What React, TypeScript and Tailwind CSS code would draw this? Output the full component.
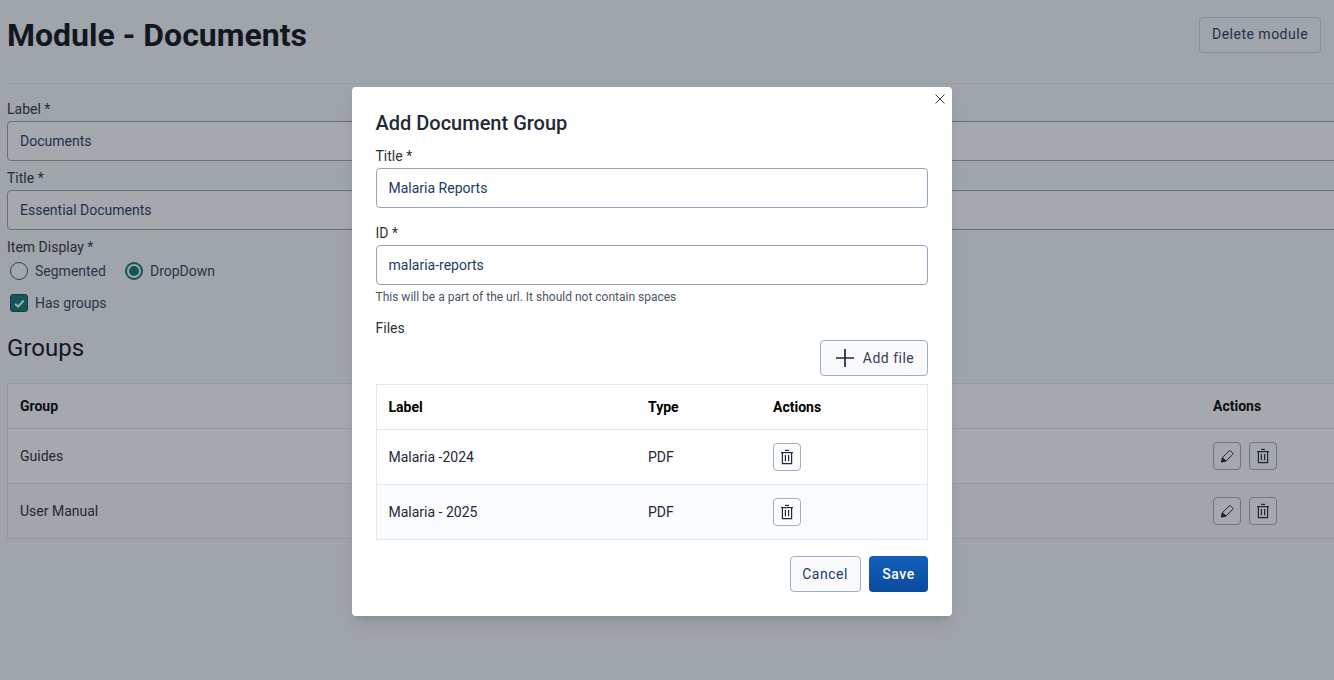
import React from "react";

const Trash = () => (
  <svg width="16" height="16" viewBox="0 0 16 16" fill="none" stroke="currentColor" strokeWidth="1.2">
    <path d="M2 3.6h12" />
    <path d="M6 1.4h4" />
    <path d="M3.4 3.6v11h9.2v-11" />
    <path d="M6.4 6v6.2M9.6 6v6.2" />
  </svg>
);

const Pencil = () => (
  <svg width="16" height="16" viewBox="0 0 16 16" fill="none" stroke="currentColor" strokeWidth="1">
    <path d="M10 3a1.2 1.2 0 0 1 1.7 0l1.9 1.9a1.2 1.2 0 0 1 0 1.7L7 13l-4.5 1 1-4.5z" strokeLinejoin="round" />
    <path d="M2.5 14l1-4.5 3.5 3.5z" fill="currentColor" />
  </svg>
);

const IconBtn = ({ children, dim }: { children: React.ReactNode; dim?: boolean }) => (
  <button
    className={`w-[28px] h-[28px] flex items-center justify-center rounded-[4px] border text-[#1e293b] ${
      dim ? "border-[#a3adbb] bg-white" : "border-[#a0aec0] bg-[#fbfcfe]"
    }`}
  >
    {children}
  </button>
);

const Field = ({ label, value }: { label: string; value: string }) => (
  <div className="flex flex-col">
    <label className="text-[14px] leading-[20px] text-[#2d3238] mb-[2px]">{label}</label>
    <input
      readOnly
      value={value}
      className="w-full h-[40px] px-[12px] text-[14px] text-[#1e3a5f] bg-white border border-[#94a3b8] rounded-[4px] outline-none"
    />
  </div>
);

const Row = ({ name, alt }: { name: string; alt?: boolean }) => (
  <div
    className={`h-[55px] flex items-center justify-between pl-[12px] pr-[69px] border-t border-[#e2e8f0] text-[14px] text-[#1f2937] ${
      alt ? "bg-[#fbfcfe]" : "bg-white"
    }`}
  >
    <span>{name}</span>
    <div className="flex gap-[8px] w-[64px]">
      <IconBtn dim>
        <Pencil />
      </IconBtn>
      <IconBtn dim>
        <Trash />
      </IconBtn>
    </div>
  </div>
);

const FileRow = ({ label, alt }: { label: string; alt?: boolean }) => (
  <div className={`h-[55px] flex items-center border-t border-[#e2e8f0] text-[14px] text-[#1f2937] ${alt ? "bg-[#fbfcfe]" : "bg-white"}`}>
    <span className="w-[271.5px] pl-[12px]">{label}</span>
    <span className="w-[125px]">PDF</span>
    <IconBtn>
      <Trash />
    </IconBtn>
  </div>
);

export default function App() {
  return (
    <div className="relative h-[680px] w-[1334px] overflow-hidden bg-[#f7f8fc] font-['Roboto',sans-serif]">
      <div className="w-[1360px] pl-[7px] pr-[13px]">
        <div className="w-[1327px] h-[84px] pr-[13px] flex justify-between items-start border-b border-[#e5e7eb]">
          <h1 className="mt-[14px] text-[32px] leading-[42px] font-bold text-[#0b0f14]">Module - Documents</h1>
          <button className="mt-[17px] w-[122px] h-[36px] pb-[2px] rounded-[4px] border border-[#cbd5e1] bg-[#f7f8fc] text-[14px] tracking-[0.5px] text-[#1e3a5f]">
            Delete module
          </button>
        </div>
        <div className="mt-[15px] flex flex-col gap-[7px]">
          <Field label="Label *" value="Documents" />
          <Field label="Title *" value="Essential Documents" />
        </div>
        <div className="mt-[7px] text-[14px] leading-[20px] text-[#2d3238]">Item Display *</div>
        <div className="mt-[4px] ml-[3px] h-[20px] flex items-center text-[14px] text-[#334155]">
          <span className="w-[18px] h-[18px] rounded-full border border-[#475569] bg-white mr-[7px]" />
          <span className="mr-[19px]">Segmented</span>
          <span className="w-[18px] h-[18px] rounded-full border-[2px] border-[#0f766e] mr-[7px] flex items-center justify-center">
            <span className="w-[10px] h-[10px] rounded-full bg-[#0f766e]" />
          </span>
          <span>DropDown</span>
        </div>
        <div className="mt-[12px] ml-[3px] h-[20px] flex items-center text-[14px] text-[#334155]">
          <span className="w-[18px] h-[18px] rounded-[3px] border border-[#134e4a] bg-[#0f766e] mr-[7px] flex items-center justify-center">
            <svg width="13" height="13" viewBox="0 0 12 12" fill="none" stroke="#fff" strokeWidth="1.9">
              <path d="M2 6.2l2.7 2.7 5.2-5.6" />
            </svg>
          </span>
          <span>Has groups</span>
        </div>
        <h2 className="mt-[19px] text-[24px] leading-[32px] text-[#0b0f14]">Groups</h2>
        <div className="mt-[19px] border border-[#e2e8f0] bg-white">
          <div className="h-[44px] flex items-center justify-between pl-[12px] pr-[69px] text-[14px] font-bold text-black">
            <span>Group</span>
            <span className="w-[64px]">Actions</span>
          </div>
          <Row name="Guides" />
          <Row name="User Manual" alt />
        </div>
      </div>

      <div className="absolute inset-0 bg-[#1e2532]/40 pl-[351.5px] pt-[87px]">
        <div className="relative w-[600px] h-[529px] bg-white rounded-[4px] shadow-lg px-[24px] pt-[24px]">
          <button className="absolute top-[6px] right-[6px] text-[#334155]">
            <svg width="12" height="12" viewBox="0 0 12 12" fill="none" stroke="currentColor" strokeWidth="1">
              <path d="M1.5 1.5l9 9M10.5 1.5l-9 9" />
            </svg>
          </button>
          <h3 className="text-[20px] leading-[24px] font-medium text-[#1f2937]">Add Document Group</h3>
          <div className="mt-[11px]">
            <Field label="Title *" value="Malaria Reports" />
          </div>
          <div className="mt-[15px]">
            <Field label="ID *" value="malaria-reports" />
          </div>
          <p className="mt-[4px] text-[12px] leading-[16px] text-[#4b5563]">This will be a part of the url. It should not contain spaces</p>
          <div className="mt-[15px] text-[14px] leading-[16px] text-[#2d3238]">Files</div>
          <div className="mt-[4px] flex justify-end">
            <button className="w-[108px] h-[36px] pl-[2px] flex items-center justify-center gap-[8px] rounded-[4px] border border-[#a0aec0] bg-[#f8fafc] text-[14px] tracking-[0.5px] text-[#374151]">
              <svg width="20" height="20" viewBox="0 0 20 20" fill="none" stroke="#1e293b" strokeWidth="1.7">
                <path d="M10 1v18M1 10h18" />
              </svg>
              Add file
            </button>
          </div>
          <div className="mt-[8px] border border-[#e2e8f0]">
            <div className="h-[44px] flex items-center text-[14px] font-bold text-black">
              <span className="w-[271.5px] pl-[12px]">Label</span>
              <span className="w-[125px]">Type</span>
              <span>Actions</span>
            </div>
            <FileRow label="Malaria -2024" />
            <FileRow label="Malaria - 2025" alt />
          </div>
          <div className="mt-[16px] flex justify-end gap-[8px]">
            <button className="w-[71px] h-[36px] rounded-[4px] border border-[#a0aec0] bg-[#f8fafc] text-[14px] tracking-[0.5px] text-[#1e3a5f]">Cancel</button>
            <button className="w-[59px] h-[36px] pl-[1px] rounded-[4px] bg-gradient-to-b from-[#1560bd] to-[#0a4a9c] text-[14px] font-medium tracking-[0.5px] text-white">Save</button>
          </div>
        </div>
      </div>
    </div>
  );
}
